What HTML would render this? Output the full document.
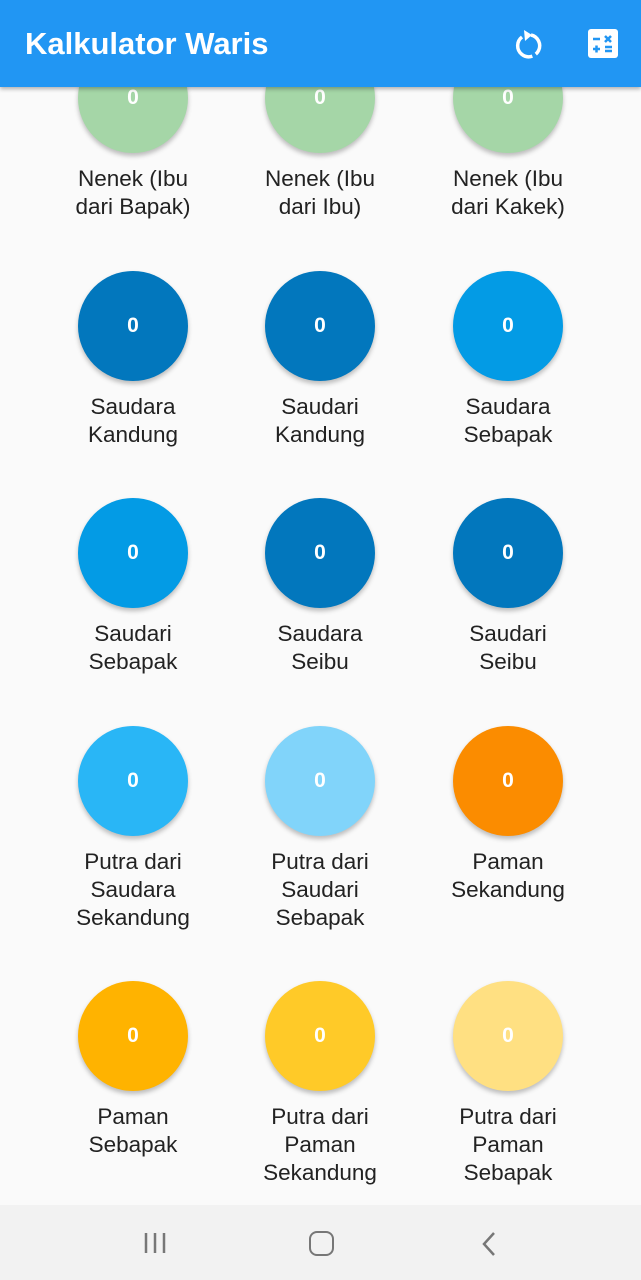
<!DOCTYPE html>
<html><head><meta charset="utf-8"><style>
*{margin:0;padding:0;box-sizing:border-box}
body{width:641px;height:1280px;overflow:hidden;background:#fafafa;font-family:"Liberation Sans",Roboto,sans-serif;position:relative}
.c{position:absolute;width:110px;height:110px;border-radius:50%;color:#fff;font-weight:bold;font-size:21px;display:flex;align-items:center;justify-content:center;box-shadow:0 3px 5px rgba(0,0,0,.25)}
.l{position:absolute;width:180px;text-align:center;font-size:22.5px;line-height:28px;color:#222}
.hdr{position:absolute;left:0;top:0;width:641px;height:87px;background:#2196F3;box-shadow:0 2px 4px rgba(0,0,0,.3);z-index:5}
.hdr h1{position:absolute;left:25px;top:26px;color:#fff;font-size:31px;font-weight:bold}
.nav{position:absolute;left:0;top:1205px;width:641px;height:75px;background:#f2f2f2}
</style></head><body>
<div class="hdr"><h1>Kalkulator Waris</h1>
<svg style="position:absolute;left:512px;top:28px" width="32" height="34" viewBox="0 0 32 34"><path d="M10 9 A11 11 0 1 0 19 7" fill="none" stroke="#fff" stroke-width="3.5" stroke-dasharray="31 4 40"/><path d="M12 2 L20 7 L13 13 Z" fill="#fff"/></svg>
<div style="position:absolute;left:588px;top:29px;width:30px;height:29px;background:#fff;border-radius:3px"></div>
<svg style="position:absolute;left:588px;top:29px" width="30" height="29"><g stroke="#2196F3" stroke-width="2.5"><path d="M5 10h7M17 7l6 6M23 7l-6 6M5 20h7M8.5 16.5v7M17 18h7M17 22h7"/></g></svg>
</div>
<div id="g"></div>
<div class="nav">
<svg style="position:absolute;left:143px;top:26px" width="24" height="24"><g stroke="#777" stroke-width="2.5"><path d="M3 2v20M12 2v20M21 2v20"/></g></svg>
<div style="position:absolute;left:309px;top:26px;width:25px;height:25px;border:2.5px solid #777;border-radius:8px"></div>
<svg style="position:absolute;left:480px;top:26px" width="20" height="26"><path d="M14 2 L4 13 L14 24" fill="none" stroke="#777" stroke-width="2.5"/></svg>
</div>
<script>
var xs=[133,320,508];
var rows=[
[98,[["#A5D6A7","Nenek (Ibu<br>dari Bapak)"],["#A5D6A7","Nenek (Ibu<br>dari Ibu)"],["#A5D6A7","Nenek (Ibu<br>dari Kakek)"]]],
[326,[["#0277BD","Saudara<br>Kandung"],["#0277BD","Saudari<br>Kandung"],["#039BE5","Saudara<br>Sebapak"]]],
[553,[["#039BE5","Saudari<br>Sebapak"],["#0277BD","Saudara<br>Seibu"],["#0277BD","Saudari<br>Seibu"]]],
[781,[["#29B6F6","Putra dari<br>Saudara<br>Sekandung"],["#81D4FA","Putra dari<br>Saudari<br>Sebapak"],["#FB8C00","Paman<br>Sekandung"]]],
[1036,[["#FFB300","Paman<br>Sebapak"],["#FFCA28","Putra dari<br>Paman<br>Sekandung"],["#FFE082","Putra dari<br>Paman<br>Sebapak"]]]];
var h="";
rows.forEach(function(r){r[1].forEach(function(it,i){
h+='<div class="c" style="left:'+(xs[i]-55)+'px;top:'+(r[0]-55)+'px;background:'+it[0]+'">0</div>';
h+='<div class="l" style="left:'+(xs[i]-90)+'px;top:'+(r[0]+67)+'px">'+it[1]+'</div>';});});
document.getElementById("g").innerHTML=h;
</script>
</body></html>
